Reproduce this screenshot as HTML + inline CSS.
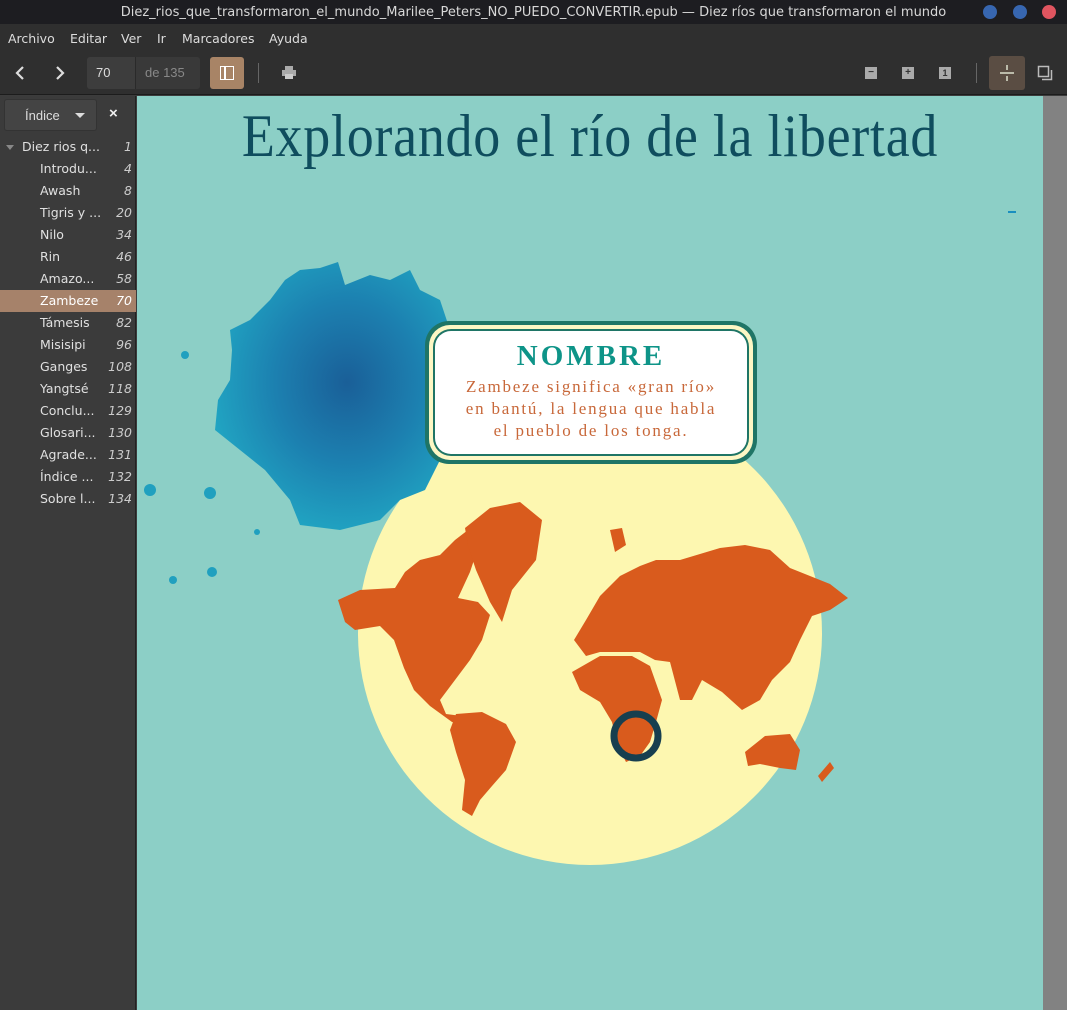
<!DOCTYPE html>
<html><head><meta charset="utf-8"><style>
*{margin:0;padding:0;box-sizing:border-box}
body{width:1067px;height:1010px;overflow:hidden;background:#3c3c3c;font-family:"Liberation Sans","DejaVu Sans",sans-serif;position:relative}
.tb{position:absolute;left:0;top:0;width:1067px;height:24px;background:#1d1d21;color:#d8d8d8;font-size:13px;text-align:center;line-height:25px;font-family:"DejaVu Sans",sans-serif;padding-left:0px}
.dot{position:absolute;top:5px;width:14px;height:14px;border-radius:50%}
.menu{position:absolute;top:24px;left:0;width:1067px;height:28px;background:#2f2f2f;color:#ddd;font-size:12.5px;font-family:"DejaVu Sans",sans-serif}
.menu span{position:absolute;top:7px}
.tool{position:absolute;top:52px;left:0;width:1067px;height:43px;background:#2f2f2f;border-bottom:1px solid #1c1c1c}
.side{position:absolute;left:0;top:96px;width:136px;height:914px;background:#3b3b3b;border-right:1px solid #222}
.row{position:absolute;left:0;width:136px;height:22px;color:#e0e0e0;font-size:12.5px;line-height:22px;font-family:"DejaVu Sans",sans-serif}
.row .t{position:absolute;left:40px}
.row .n{position:absolute;right:4px;font-style:italic;color:#ccc}
.page{position:absolute;left:137px;top:96px;width:906px;height:914px;background:#8ccfc6;overflow:hidden}
.gray{position:absolute;left:1043px;top:96px;width:24px;height:914px;background:#828282}
</style></head><body>
<div class="tb">Diez_rios_que_transformaron_el_mundo_Marilee_Peters_NO_PUEDO_CONVERTIR.epub — Diez ríos que transformaron el mundo</div>
<div class="dot" style="left:983px;background:#3766b0"></div>
<div class="dot" style="left:1013px;background:#3766b0"></div>
<div class="dot" style="left:1042px;background:#e05560"></div>
<div class="menu"><span style="left:8px">Archivo</span><span style="left:70px">Editar</span><span style="left:121px">Ver</span><span style="left:157px">Ir</span><span style="left:182px">Marcadores</span><span style="left:269px">Ayuda</span></div>
<div class="tool">
<svg style="position:absolute;left:14px;top:12px" width="60" height="18"><path d="M9 3L3 9L9 15" stroke="#ddd" stroke-width="2.2" fill="none"/><path d="M43 3L49 9L43 15" stroke="#ddd" stroke-width="2.2" fill="none"/></svg>
<div style="position:absolute;left:87px;top:5px;width:48px;height:32px;background:#3d3d3d;border-radius:3px 0 0 3px;color:#ddd;font-size:13px;line-height:32px;padding-left:9px">70</div>
<div style="position:absolute;left:135px;top:5px;width:65px;height:32px;background:#393939;border-left:1px solid #2a2a2a;border-radius:0 3px 3px 0;color:#888;font-size:13px;line-height:32px;padding-left:9px">de 135</div>
<div style="position:absolute;left:210px;top:5px;width:34px;height:32px;background:#a88466;border-radius:3px"><div style="position:absolute;left:10px;top:9px;width:14px;height:14px;border:1.5px solid #fff"></div><div style="position:absolute;left:14px;top:9px;width:1.5px;height:14px;background:#fff"></div></div>
<div style="position:absolute;left:258px;top:11px;width:1px;height:20px;background:#666"></div>
<svg style="position:absolute;left:281px;top:13px" width="16" height="15"><rect x="4" y="1" width="8" height="4" fill="#aaa"/><rect x="1" y="5" width="14" height="6" fill="#aaa"/><rect x="4" y="9" width="8" height="5" fill="#ccc"/></svg>
<div style="position:absolute;left:865px;top:15px;width:12px;height:12px;background:#aaa;color:#333;font-size:10px;line-height:12px;text-align:center;font-weight:bold">−</div>
<div style="position:absolute;left:902px;top:15px;width:12px;height:12px;background:#aaa;color:#333;font-size:10px;line-height:12px;text-align:center;font-weight:bold">+</div>
<div style="position:absolute;left:939px;top:15px;width:12px;height:12px;background:#aaa;color:#333;font-size:9px;line-height:12px;text-align:center;font-weight:bold">1</div>
<div style="position:absolute;left:976px;top:11px;width:1px;height:20px;background:#666"></div>
<div style="position:absolute;left:989px;top:4px;width:36px;height:34px;background:#5a4d43;border-radius:3px"><div style="position:absolute;left:11px;top:16px;width:14px;height:1.5px;background:#bba"></div><div style="position:absolute;left:17px;top:9px;width:1.5px;height:5px;background:#bba"></div><div style="position:absolute;left:17px;top:20px;width:1.5px;height:5px;background:#bba"></div></div>
<svg style="position:absolute;left:1037px;top:13px" width="16" height="16"><rect x="1.5" y="1.5" width="10" height="10" fill="none" stroke="#bbb" stroke-width="1.5"/><path d="M5 14.5H14.5V5" fill="none" stroke="#bbb" stroke-width="1.5"/></svg>
</div>
<div class="side">
<div style="position:absolute;left:4px;top:3px;width:93px;height:32px;background:#444;border:1px solid #333;border-radius:3px;color:#ddd;font-size:13px;line-height:32px;padding-left:20px">Índice<span style="position:absolute;left:70px;top:13px;border-left:5px solid transparent;border-right:5px solid transparent;border-top:5px solid #ddd"></span></div>
<div style="position:absolute;left:109px;top:9px;color:#eee;font-size:15px;font-weight:bold">×</div>
<div class="row" style="top:40px"><span style="position:absolute;left:6px;top:9px;border-left:4px solid transparent;border-right:4px solid transparent;border-top:5px solid #888"></span><span class="t" style="left:22px">Diez rios q...</span><span class="n">1</span></div>
<div class="row" style="top:62px"><span class="t">Introdu...</span><span class="n">4</span></div>
<div class="row" style="top:84px"><span class="t">Awash</span><span class="n">8</span></div>
<div class="row" style="top:106px"><span class="t">Tigris y ...</span><span class="n">20</span></div>
<div class="row" style="top:128px"><span class="t">Nilo</span><span class="n">34</span></div>
<div class="row" style="top:150px"><span class="t">Rin</span><span class="n">46</span></div>
<div class="row" style="top:172px"><span class="t">Amazo...</span><span class="n">58</span></div>
<div class="row" style="top:194px;background:#a6826a;color:#fff"><span class="t">Zambeze</span><span class="n" style="color:#fff">70</span></div>
<div class="row" style="top:216px"><span class="t">Támesis</span><span class="n">82</span></div>
<div class="row" style="top:238px"><span class="t">Misisipi</span><span class="n">96</span></div>
<div class="row" style="top:260px"><span class="t">Ganges</span><span class="n">108</span></div>
<div class="row" style="top:282px"><span class="t">Yangtsé</span><span class="n">118</span></div>
<div class="row" style="top:304px"><span class="t">Conclu...</span><span class="n">129</span></div>
<div class="row" style="top:326px"><span class="t">Glosari...</span><span class="n">130</span></div>
<div class="row" style="top:348px"><span class="t">Agrade...</span><span class="n">131</span></div>
<div class="row" style="top:370px"><span class="t">Índice ...</span><span class="n">132</span></div>
<div class="row" style="top:392px"><span class="t">Sobre l...</span><span class="n">134</span></div>
</div>
<div class="page">
<svg width="906" height="914" viewBox="137 96 906 914" style="position:absolute;left:0;top:0">
<defs><radialGradient id="ink" cx="0.55" cy="0.45" r="0.6"><stop offset="0" stop-color="#1a5f98"/><stop offset="0.5" stop-color="#1c80b0"/><stop offset="1" stop-color="#21a8c4"/></radialGradient></defs>
<circle cx="590" cy="633" r="232" fill="#fdf7b0"/>
<path fill="url(#ink)" d="M300 270L320 268L338 262L345 285L370 275L390 280L410 270L420 290L440 300L450 330L440 380L455 420L440 460L425 490L400 500L380 520L340 530L300 525L290 500L265 470L240 450L215 430L218 400L230 380L232 350L230 330L250 320L270 300L285 280Z"/>
<circle cx="185" cy="355" r="4" fill="#20a0bf"/><circle cx="210" cy="493" r="6" fill="#20a0bf"/><circle cx="150" cy="490" r="6" fill="#20a0bf"/><circle cx="212" cy="572" r="5" fill="#20a0bf"/><circle cx="173" cy="580" r="4" fill="#20a0bf"/><circle cx="257" cy="532" r="3" fill="#20a0bf"/>
<rect x="1008" y="211" width="8" height="2" fill="#1a8fbf"/>
<g fill="#d95b1d">
<path d="M338 600L360 590L395 588L405 572L420 560L440 555L455 540L468 530L478 548L470 572L458 598L478 602L490 615L482 640L470 660L455 680L440 700L446 714L462 716L470 726L452 722L430 706L414 690L404 668L394 640L380 626L355 630L345 622Z"/>
<path d="M465 528L490 508L520 502L542 520L536 560L512 590L502 622L490 602L476 570L468 546Z"/>
<path d="M456 714L482 712L506 724L516 742L506 770L492 786L480 800L472 816L462 810L465 780L456 752L450 730Z"/>
<path d="M574 640L586 620L600 596L620 576L640 566L656 560L680 560L700 554L720 548L745 545L770 550L790 568L830 584L848 598L830 610L812 616L800 640L790 662L772 680L760 700L742 710L722 692L702 680L692 700L680 700L670 662L655 660L640 652L620 652L600 652L586 656Z"/>
<path d="M572 672L600 656L632 656L650 666L662 700L656 722L650 742L640 756L626 762L618 746L612 722L600 702L580 690Z"/>
<path d="M745 752L765 736L790 734L800 750L796 770L780 768L760 764L748 766Z"/>
<path d="M610 530L622 528L626 545L615 552Z"/><path d="M818 776L830 762L834 768L822 782Z"/>
</g>
<circle cx="636" cy="736" r="22" fill="none" stroke="#173f4f" stroke-width="7"/>
<rect x="425" y="321" width="332" height="143" rx="24" fill="#1f7566"/>
<rect x="429" y="325" width="324" height="135" rx="21" fill="#fdf7c4"/>
<rect x="433" y="329" width="316" height="127" rx="18" fill="#1f7566"/>
<rect x="435" y="331" width="312" height="123" rx="16" fill="#fff"/>
</svg>
<div style="position:absolute;left:0;width:906px;top:6px;text-align:center;font-family:'Liberation Serif',serif;font-size:60px;color:#0f4d5e;transform:scaleX(0.9);letter-spacing:0.8px">Explorando el río de la libertad</div>
<div style="position:absolute;left:298px;width:312px;top:244px;text-align:center;font-family:'Liberation Serif',serif;font-weight:bold;font-size:29px;letter-spacing:3px;color:#0e9488">NOMBRE</div>
<div style="position:absolute;left:298px;width:312px;top:280px;text-align:center;font-family:'Liberation Serif',serif;font-size:17px;line-height:22px;letter-spacing:1.8px;color:#c8683a">Zambeze significa «gran río»<br>en bantú, la lengua que habla<br>el pueblo de los tonga.</div>
</div>
<div class="gray"></div>
</body></html>
